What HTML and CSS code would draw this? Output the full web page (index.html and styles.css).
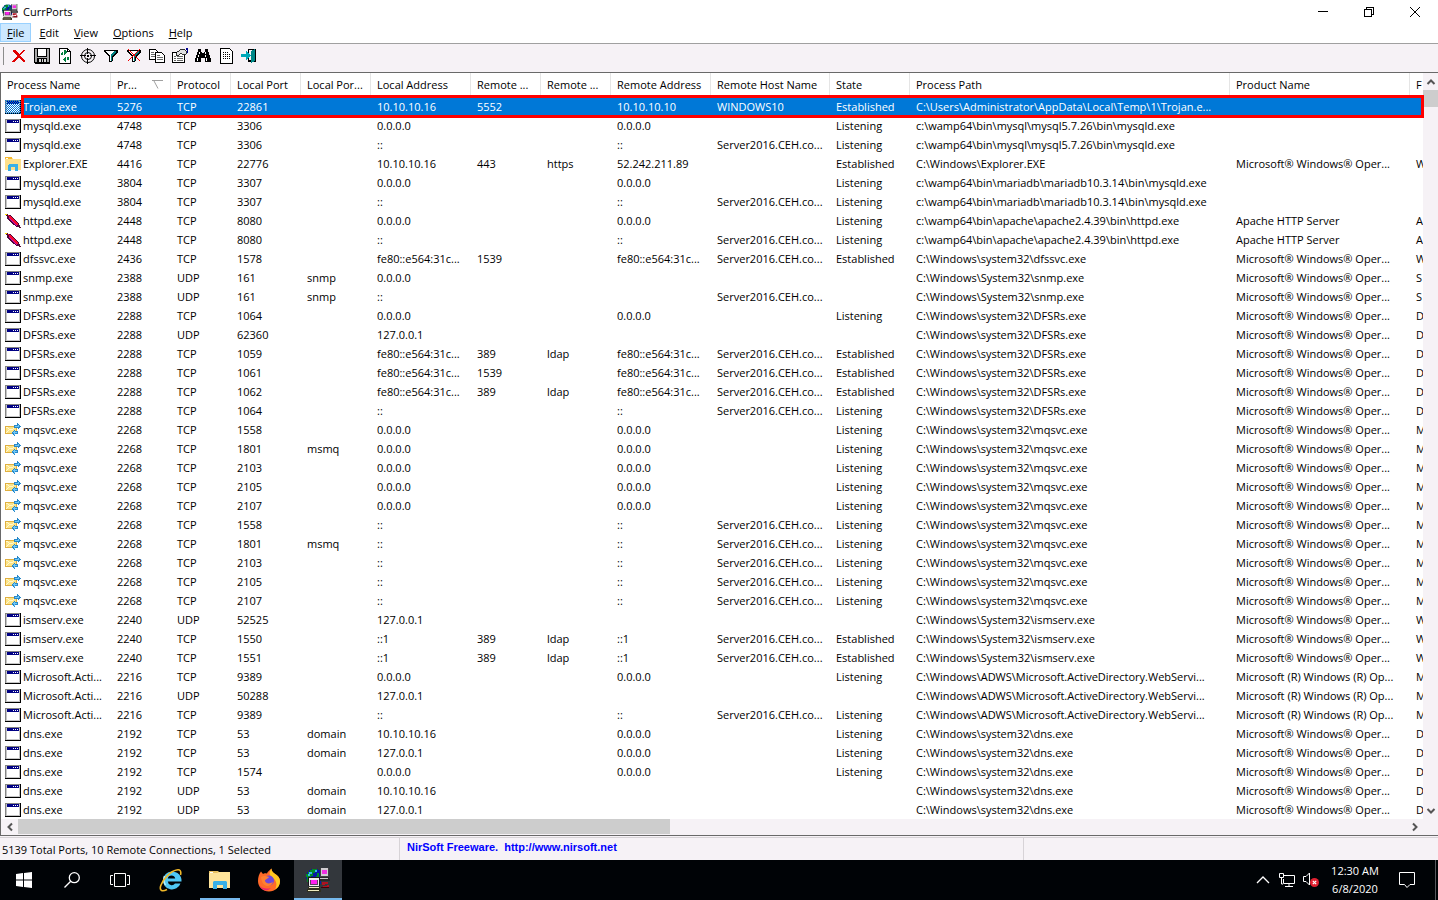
FILE: index.html
```html
<!DOCTYPE html>
<html lang="en">
<head>
    <meta charset="UTF-8">
    <meta name="viewport" content="width=device-width, initial-scale=1.0">
    <title>CurrPorts</title>
    <link rel="stylesheet" href="styles.css">
</head>
<body>
    <!-- Shared icons -->
    <svg class="sprite" aria-hidden="true">
        <symbol id="icon-app" viewBox="0 0 24 24">
            <path d="M5 1h7v1h3v14H3v-2H1v-3H0V6h1V4h2V2h2z" fill="#0818a8"/>
            <path d="M6 1h5v2H9v2H7v3H5v4H3v2H1V9H0V6h2V4h2V2h2zM11 5h2v5h-3V8h1z" fill="#008c28"/>
            <path d="M3 4h3v2H4v2H2V6h1zM9 2h2v2H9z" fill="#38b8e8"/>
            <path d="M14 0h9v9h-9z" fill="#404040"/>
            <path d="M15 0h7v8h-7z" fill="#d0ccd0"/>
            <path d="M16 2h5v4h-5z" fill="#f030e0"/>
            <path d="M13 9h10v2h1v2H12v-2h1z" fill="#282828"/>
            <path d="M14 10h8v1h-8z" fill="#c8c8c8"/>
            <path d="M2 9h12v9H2z" fill="#181818"/>
            <path d="M3 10h10v8H3z" fill="#f0ecf0"/>
            <path d="M4 12h8v5H4z" fill="#604060"/>
            <path d="M5 12h6v4H5z" fill="#ff20f0"/>
            <path d="M2 19h12v2h1v3H1v-3h1z" fill="#303020"/>
            <path d="M3 19h10v1H3zM2 22h11v1H2z" fill="#f0ecc0"/>
            <path d="M16 14h6v2h-3v1h4v3h-6v-2h4v-1h-5z" fill="#b01020"/>
            <path d="M15 19h8v1h-8z" fill="#400008"/>
        </symbol>
        <symbol id="icon-window" viewBox="0 0 16 14">
            <path d="M0 0h16v14H0z" fill="#000"/>
            <path d="M0 0h15v13H0z" fill="#848484"/>
            <path d="M1 1h14v12H1z" fill="#c6c6c6"/>
            <path d="M2 1h12v3H2z" fill="#000084"/>
            <path d="M8 2h1v1H8zM10 2h1v1h-1zM12 2h1v1h-1z" fill="#fff"/>
            <path d="M2 4h12v8H2z" fill="#fff"/>
        </symbol>
        <symbol id="icon-dither" viewBox="0 0 16 14">
            <pattern id="dots" width="2" height="2" patternUnits="userSpaceOnUse">
                <path d="M0 0h1v1H0zM1 1h1v1H1z" fill="#0078d7"/>
            </pattern>
            <use href="#icon-window" width="16" height="14"/>
            <path d="M0 0h16v14H0z" fill="url(#dots)"/>
        </symbol>
        <symbol id="icon-folder" viewBox="0 0 16 14">
            <path d="M0 0h7l1 2h8v11H0z" fill="#ffe08a"/>
            <path d="M0 0h7v2H0z" fill="#f5b82e"/>
            <path d="M1 1h2v1H1z" fill="#fff"/>
            <path d="M3 14V8l1-1h8l1 1v6h-3v-4H6v4z" fill="#38b0e8"/>
        </symbol>
        <symbol id="icon-feather" viewBox="0 0 16 14">
            <path d="M1 0l4 1 4 4 5 5 2 4-4-1-6-4-4-5z" fill="#500838"/>
            <path d="M2 1l3 1 4 4 4 4-1 1-5-4-3-4z" fill="#f80830"/>
            <path d="M4 4l8 8" stroke="#c010c8" stroke-width="1"/>
            <path d="M0 0h2v1H0z" fill="#ffe000"/>
        </symbol>
        <symbol id="icon-mail" viewBox="0 0 16 14">
            <path d="M0 3h12v8H0z" fill="#e0b040"/>
            <path d="M1 4h10v6H1z" fill="#fce488"/>
            <path d="M1 4l5 3 5-3M1 10l3-3" fill="none" stroke="#fff8d0"/>
            <path d="M9 2h3V0l4 3-3 4V5H9z" fill="#2888c8"/>
            <path d="M10 3h3V2l1 1-1 1h-3z" fill="#70c8f8"/>
            <path d="M13 8h-3V6l-4 4 4 4v-3h3z" fill="#2888c8"/>
            <path d="M12 9.500H8.500l1-1v3" fill="none" stroke="#70c8f8"/>
        </symbol>
    </svg>

    <div class="window">
        <header class="title-bar">
            <svg class="app-icon"><use href="#icon-app"/></svg>
            <h1>CurrPorts</h1>
            <div class="window-buttons">
                <button aria-label="Minimize"><svg viewBox="0 0 12 12"><path d="M1 5.500h10"/></svg></button>
                <button aria-label="Restore"><svg viewBox="0 0 12 12"><path d="M1.500 3.500h7v7h-7zM3.500 3.500v-2h7v7h-2"/></svg></button>
                <button aria-label="Close"><svg class="smooth" viewBox="0 0 12 12"><path d="M1 1l10 10M11 1L1 11"/></svg></button>
            </div>
        </header>

        <nav class="menu-bar">
            <button class="active"><u>F</u>ile</button>
            <button><u>E</u>dit</button>
            <button><u>V</u>iew</button>
            <button><u>O</u>ptions</button>
            <button><u>H</u>elp</button>
        </nav>

        <div class="toolbar">
            <button aria-label="Close connections"><svg viewBox="0 0 16 16"><path d="M2 2h2l4 4 5-4h1L9 8l5 5v1h-2L8 10l-5 4H1l5-6-4-4z" fill="#e00000"/></svg></button>
            <button aria-label="Save"><svg viewBox="0 0 16 16"><path d="M0 0h16v16H1l-1-1z" fill="#000"/><path d="M1 1h14v13H1z" fill="#a8a8a8"/><path d="M3 0h10v9H3z" fill="#000"/><path d="M4 1h8v7H4z" fill="#fff"/><path d="M3 10h10v5H3z" fill="#000"/><path d="M5 11h2v3H5zM8 11h1v3H8zM10 11h2v3h-2z" fill="#d8d8d8"/></svg></button>
            <button aria-label="Refresh"><svg viewBox="0 0 16 16"><path d="M2.500.5h8l3 3v12h-11z" fill="#fff" stroke="#000"/><path d="M10.500.5v3h3" fill="none" stroke="#000"/><path d="M8 3v1H6v3H4V5h1V4h2V2h1l2 2-2 3H7V3M8 13v-1h2V9h2v2l-1 1H9v2H8l-2-2 2-3h1v4" fill="#008040"/></svg></button>
            <button aria-label="Process target"><svg viewBox="0 0 16 16" class="smooth"><g fill="none" stroke="#000"><circle cx="8" cy="8" r="6.500"/><circle cx="8" cy="8" r="3.500"/><path d="M7.500 0v6M7.500 10v6M0 7.500h6M10 7.500h6"/></g><path d="M7 7h2v2H7z"/></svg></button>
            <button aria-label="Filter"><svg viewBox="0 0 16 16"><path d="M1 2h14v2l-5 5v4l-2 1H6V9L1 4z" fill="#000"/><path d="M3 3h10v1l-4 4v5H7V8L3 4z" fill="#fff"/><path d="M11 3h2v1L9 8v5H8V7z" fill="#008080"/></svg></button>
            <button aria-label="Clear filter"><svg viewBox="0 0 16 16"><path d="M1 2h14v2l-5 5v4l-2 1H6V9L1 4z" fill="#000"/><path d="M3 3h10v1l-4 4v5H7V8L3 4z" fill="#fff"/><path d="M11 3h2v1L9 8v5H8V7z" fill="#008080"/><path d="M2 1l12 12M14 1L2 13" stroke="#f00000"/></svg></button>
            <button aria-label="Copy"><svg viewBox="0 0 16 16"><g fill="#fff" stroke="#000"><path d="M.5 1.500h6l2 2v8h-8z"/><path d="M6.500 4.500h6l3 3v7h-9z"/></g><path d="M2 4.500h3M2 6.500h4M2 8.500h4M8 7.500h3M8 9.500h6M8 11.500h6" stroke="#666"/></svg></button>
            <button aria-label="Properties"><svg viewBox="0 0 16 16"><path d="M.5 4.500h12v10H.5z" fill="#fff" stroke="#000"/><path d="M2 8.500h2M5 8.500h6M2 10.500h2M5 10.500h6M2 12.500h2M5 12.500h6" stroke="#666"/><path d="M4 5l4-3 4-1 2 2v3l-3 1-2-2-3 3-2-1z" fill="#e0e0e0" stroke="#000" stroke-width=".8"/><path d="M14 0h2v5h-1V2h-1z" fill="#000090"/></svg></button>
            <button aria-label="Find"><svg viewBox="0 0 16 16"><path d="M3 1h3v3h1v1h2V4h1V1h3v3h1v3h1v3h1v4h-6v-4H6v4H0v-4h1V7h1V4h1z" fill="#000"/><path d="M4 4h1v2H4zM10 4h1v2h-1zM3 7h1v2H3zM10 7h1v2h-1zM2 10h1v3H2zM11 10h1v3h-1z" fill="#fff"/></svg></button>
            <button aria-label="HTML report"><svg viewBox="0 0 16 16"><path d="M2.500.5h9l3 3v12h-12z" fill="#fff" stroke="#000"/><path d="M5 4.500h6M5 6.500h7M5 8.500h7M5 10.500h7" stroke="#000" stroke-dasharray="1 1"/></svg></button>
            <button aria-label="Exit"><svg viewBox="0 0 16 16"><path d="M7 1h8v13H7z" fill="#000"/><path d="M8 2h3v10H8z" fill="#f6f2f6"/><path d="M10 3l4-2v12l-4 2z" fill="#008888"/><path d="M0 6h5V3l5 4-5 5V9H0z" fill="#00a8b8"/></svg></button>
        </div>

        <main class="list">
            <div class="list-view">
                <table class="ports">
                    <colgroup>
                        <col class="w110"><col class="w60"><col class="w60"><col class="w70"><col class="w70">
                        <col class="w100"><col class="w70"><col class="w70"><col class="w100"><col class="w119">
                        <col class="w80"><col class="w320"><col class="w180"><col>
                    </colgroup>
                    <thead>
                        <tr>
                            <th>Process Name</th>
                            <th><span class="sorted">Pr...<svg viewBox="0 0 11 9"><path d="M0 .5h11M2 1l4 7.500"/></svg></span></th>
                            <th>Protocol</th>
                            <th>Local Port</th>
                            <th>Local Por...</th>
                            <th>Local Address</th>
                            <th>Remote ...</th>
                            <th>Remote ...</th>
                            <th>Remote Address</th>
                            <th>Remote Host Name</th>
                            <th>State</th>
                            <th>Process Path</th>
                            <th>Product Name</th>
                            <th>F</th>
                        </tr>
                    </thead>
                    <tbody id="portRows"></tbody>
                </table>
            </div>
            <div class="scroll-y">
                <button aria-label="Scroll up"><svg viewBox="0 0 10 10"><path d="M1.500 7L5 3.500 8.500 7"/></svg></button>
                <div class="thumb"></div>
                <button class="end" aria-label="Scroll down"><svg viewBox="0 0 10 10"><path d="M1.500 3L5 6.500 8.500 3"/></svg></button>
            </div>
            <div class="scroll-x">
                <button aria-label="Scroll left"><svg viewBox="0 0 10 10"><path d="M7 1.500L3.500 5 7 8.500"/></svg></button>
                <div class="track"><div class="thumb"></div></div>
                <button aria-label="Scroll right"><svg viewBox="0 0 10 10"><path d="M3 1.500L6.500 5 3 8.500"/></svg></button>
            </div>
            <div class="highlight"></div>
        </main>

        <footer class="status-bar">
            <span class="totals">5139 Total Ports, 10 Remote Connections, 1 Selected</span>
            <span class="credit"><a href="http://www.nirsoft.net">NirSoft Freeware.&nbsp; http://www.nirsoft.net</a></span>
            <span class="rest"></span>
        </footer>
    </div>

    <div class="taskbar">
        <button aria-label="Start"><svg class="s16" viewBox="0 0 16 16"><path d="M0 2l7-1v6.500H0zM8 1l8-1v7.500H8zM0 8.500h7V15l-7-1zM8 8.500h8V16l-8-1z" fill="#fff"/></svg></button>
        <button aria-label="Search"><svg class="s16" viewBox="0 0 16 16"><g fill="none" stroke="#fff" stroke-width="1.300"><circle cx="10.300" cy="5.700" r="5"/><path d="M6.700 9.300L.5 15.500"/></g></svg></button>
        <button aria-label="Task View"><svg class="s20" viewBox="0 0 20 16"><path d="M4.500 1.500h11v13h-11zM3 3.500H.5v9H3M17 3.500h2.500v9H17" fill="none" stroke="#fff"/></svg></button>
        <div class="apps">
            <button aria-label="Internet Explorer"><svg class="s24" viewBox="0 0 24 24"><path d="M12.500 3.500a9 9 0 1 0 9 12h-5.500a4 4 0 0 1-7.200-2h13.700c.6-6-4-10-10-10zM8.800 10.500c.4-4 7-4 7.400 0z" fill="#50c8f4"/><path d="M5.500 8C4.500 11 4.500 14 6.500 17" fill="none" stroke="#b8f0ff" stroke-width="1.500"/><path d="M21.500 7c1-4-.5-6-4-5C12 3 4 11 1.800 17.500 0 23 3.500 24 8 21.500" fill="none" stroke="#f0b828" stroke-width="1.600"/></svg></button>
            <button class="open" aria-label="File Explorer"><svg class="s22" viewBox="0 0 22 18"><path d="M0 0h9l2 2h10v15H0z" fill="#e8c060"/><path d="M0 2h8l2-1h11v16H0z" fill="#ffe49a"/><path d="M1 1h3v1H1z" fill="#fff"/><path d="M4 18v-7l1-1h12l1 1v7h-4v-4H8v4z" fill="#38b0e8"/></svg></button>
            <button aria-label="Firefox"><svg class="s24" viewBox="0 0 24 24"><path d="M1 13C1 9 2 6 4 3.500L6 6c1-1 2-1 4-.5C10.500 4 12 2.500 14.500.5c0 2 .5 3 3 5C21 7 23 10 23 13c0 6-5 10.500-11 10.500S1 19 1 13z" fill="#ff6a28"/><path d="M14.500.5c0 2 .5 3 3 5C21 8 23 10 23 13c0 4-2 7-5 8.500 3-5 1-10-3-12-3-2-3-6-.5-9z" fill="#ffc820"/><path d="M2 17c3 4 8 4 12 3-4 4-9 3-12-3z" fill="#f02868"/><circle cx="12" cy="12.500" r="5" fill="#7048d8"/><path d="M4 9c3-1.500 5-1 8 0-1 2-4 2-4 4 1 3 5 3 8 1-2 6-11 6-12-5z" fill="#ff8030"/></svg></button>
            <button class="open current" aria-label="CurrPorts"><svg class="s24"><use href="#icon-app"/></svg></button>
        </div>
        <div class="tray">
            <button aria-label="Show hidden icons"><svg class="s14" viewBox="0 0 14 8"><path d="M1 7l6-6 6 6" fill="none" stroke="#fff" stroke-width="1.300"/></svg></button>
            <button aria-label="Network"><svg class="s16" viewBox="0 0 16 14"><path d="M5 2.500h10.500v8H4.500V6M10 11v2M6 13.500h8M.5.5h4v4h-4zM2.500 5v6H4" fill="none" stroke="#fff"/></svg></button>
            <button aria-label="Volume"><svg class="s16" viewBox="0 0 16 16"><path d="M.5 4.500H3L6.500 1v12L3 9.500H.5z" fill="none" stroke="#fff"/><circle cx="11.500" cy="10.500" r="4.500" fill="#e02030"/><path d="M9.800 8.800l3.400 3.400M13.200 8.800l-3.400 3.400" stroke="#fff" stroke-width="1.200"/></svg></button>
            <div class="clock"><span>12:30 AM</span><span>6/8/2020</span></div>
            <button class="notes" aria-label="Notifications"><svg class="s16" viewBox="0 0 16 16"><path d="M.5.5h15v12H11l-3 3-2.500-3h-5z" fill="none" stroke="#fff"/></svg></button>
            <button class="desktop" aria-label="Show desktop"></button>
        </div>
    </div>

    <script src="script.js"></script>
</body>
</html>
```

FILE: styles.css
```css
* {
    box-sizing: border-box;
}
body {
    margin: 0;
    height: 100vh;
    display: flex;
    flex-direction: column;
    overflow: hidden;
    background: #fff;
    color: #000;
    font-family: "Open Sans", "Noto Sans", sans-serif;
    font-size: 11px;
}
button {
    margin: 0;
    padding: 0;
    border: 0;
    background: none;
    color: inherit;
    font: inherit;
}
svg {
    display: block;
}
.sprite {
    position: absolute;
    width: 0;
    height: 0;
}
.window {
    flex: 1;
    min-height: 0;
    display: flex;
    flex-direction: column;
    background: #f6f2f6;
}

/* Title bar */
.title-bar {
    display: flex;
    align-items: center;
    height: 23px;
    padding-left: 2px;
    background: #fff;
}
.app-icon {
    width: 16px;
    height: 16px;
}
.title-bar h1 {
    margin: 0 auto 0 5px;
    font-size: 11px;
    font-weight: normal;
}
.window-buttons {
    display: flex;
}
.window-buttons button {
    display: flex;
    align-items: center;
    justify-content: center;
    width: 46px;
    height: 21px;
}
.window-buttons svg {
    width: 12px;
    height: 12px;
    fill: none;
    stroke: #000;
    shape-rendering: crispEdges;
}
.window-buttons .smooth {
    shape-rendering: auto;
}

/* Menu */
.menu-bar {
    display: flex;
    gap: 1px;
    height: 20px;
    background: #fff;
}
.menu-bar button {
    height: 19px;
    padding: 0 6px;
    border: 1px solid transparent;
}
.menu-bar .active {
    background: #cce8ff;
    border-color: #99d1ff;
}

/* Toolbar */
.toolbar {
    display: flex;
    align-items: center;
    gap: 7px;
    height: 29px;
    padding: 0 3px 4px;
    border-top: 1px solid #a0a0a0;
}
.toolbar::before {
    content: "";
    width: 1px;
    height: 18px;
    background: #8c8c8c;
}
.toolbar svg {
    width: 16px;
    height: 16px;
    shape-rendering: crispEdges;
}
.toolbar .smooth {
    shape-rendering: auto;
}

/* Port list */
.list {
    position: relative;
    flex: 1;
    min-height: 0;
    display: grid;
    grid-template-columns: minmax(0, 1fr) 15px;
    grid-template-rows: minmax(0, 1fr) 16px;
    border: solid #696969;
    border-width: 1px 0 1px 1px;
}
.list-view {
    overflow: hidden;
    background: #fff;
}
.ports {
    width: 1510px;
    table-layout: fixed;
    border-collapse: separate;
    border-spacing: 0;
}
.w60 { width: 60px; }
.w70 { width: 70px; }
.w80 { width: 80px; }
.w100 { width: 100px; }
.w110 { width: 110px; }
.w119 { width: 119px; }
.w180 { width: 180px; }
.w320 { width: 320px; }
.ports th,
.ports td {
    padding: 0 0 0 6px;
    overflow: hidden;
    white-space: nowrap;
    text-align: left;
    font-weight: normal;
}
.ports th {
    height: 24px;
    padding-bottom: 2px;
    border-right: 1px solid #e5e5e5;
}
.ports td {
    height: 19px;
    line-height: 19px;
}
.ports td:first-child {
    padding-left: 4px;
}
.sorted {
    display: flex;
    align-items: center;
    justify-content: space-between;
    padding-right: 7px;
}
.sorted svg {
    width: 11px;
    height: 9px;
    fill: none;
    stroke: #a0a0a0;
}
.process {
    display: flex;
    align-items: center;
    gap: 2px;
}
.process svg {
    flex: none;
    width: 16px;
    height: 14px;
    shape-rendering: crispEdges;
}
.selected td {
    background: #0078d7;
    color: #fff;
}
.selected td:first-child {
    background: linear-gradient(to right, #fff 20px, #0078d7 20px);
}
.highlight {
    position: absolute;
    top: 22px;
    left: 20px;
    right: 14px;
    height: 23px;
    border: 3px solid #f00;
    pointer-events: none;
}

/* Scroll bars */
.scroll-y {
    display: flex;
    flex-direction: column;
}
.scroll-y button,
.scroll-x button {
    display: flex;
    align-items: center;
    justify-content: center;
    flex: none;
}
.scroll-y button {
    height: 17px;
}
.scroll-y .end {
    margin-top: auto;
}
.scroll-x button {
    width: 17px;
}
.scroll-y svg,
.scroll-x svg {
    width: 10px;
    height: 10px;
    fill: none;
    stroke: #555;
    stroke-width: 2;
}
.thumb {
    background: #cdcdcd;
}
.scroll-y .thumb {
    height: 17px;
}
.scroll-x {
    display: flex;
    padding-bottom: 1px;
}
.scroll-x .track {
    flex: 1;
    display: flex;
}
.scroll-x .thumb {
    width: 47%;
}

/* Status bar */
.status-bar {
    display: grid;
    grid-template-columns: 400px 624px 1fr;
    height: 23px;
    margin-top: 1px;
    padding-bottom: 1px;
    border-top: 1px solid #d7d3d7;
}
.totals,
.credit {
    padding-top: 1px;
    border-right: 1px solid #d7d3d7;
}
.totals {
    padding-left: 2px;
    line-height: 22px;
}
.credit {
    padding-left: 7px;
    font: bold 11px/17px "Liberation Sans", Arial, sans-serif;
}
.credit a {
    color: #00f;
    text-decoration: none;
}

/* Taskbar */
.taskbar {
    display: flex;
    height: 40px;
    background: #000306;
    color: #fff;
}
.taskbar button {
    display: flex;
    align-items: center;
    justify-content: center;
    width: 48px;
    height: 40px;
}
.apps {
    display: flex;
    gap: 1px;
    margin-left: 3px;
}
.apps .open {
    background: linear-gradient(#76b9ed, #76b9ed) center bottom / 40px 2px no-repeat;
}
.apps .current {
    background-color: #33373c;
    background-size: 48px 2px;
}
.s14 { width: 14px; height: 8px; }
.s16 { width: 16px; height: 16px; }
.s20 { width: 20px; height: 16px; }
.s22 { width: 22px; height: 18px; }
.s24 { width: 24px; height: 24px; }
.tray {
    display: flex;
    margin-left: auto;
}
.tray button {
    width: 24px;
}
.clock {
    display: flex;
    flex-direction: column;
    justify-content: center;
    width: 64px;
    text-align: center;
    line-height: 18px;
}
.tray .notes {
    width: 40px;
}
.tray .desktop {
    width: 3px;
    margin-left: 8px;
    border-left: 1px solid #55585c;
}
```

FILE: script.js
```js
const PRODUCTS = {
    ms: "Microsoft® Windows® Oper...",
    adws: "Microsoft (R) Windows (R) Op...",
    apache: "Apache HTTP Server",
    none: ""
};

const HOST = "Server2016.CEH.co...";
const FE80 = "fe80::e564:31c...";

// icon, name, pid, path, product, first letter of the description
const PROCESSES = {
    trojan: ["dither", "Trojan.exe", 5276, "C:\\Users\\Administrator\\AppData\\Local\\Temp\\1\\Trojan.e...", "none", ""],
    mysql: ["window", "mysqld.exe", 4748, "c:\\wamp64\\bin\\mysql\\mysql5.7.26\\bin\\mysqld.exe", "none", ""],
    explorer: ["folder", "Explorer.EXE", 4416, "C:\\Windows\\Explorer.EXE", "ms", "W"],
    mariadb: ["window", "mysqld.exe", 3804, "c:\\wamp64\\bin\\mariadb\\mariadb10.3.14\\bin\\mysqld.exe", "none", ""],
    httpd: ["feather", "httpd.exe", 2448, "c:\\wamp64\\bin\\apache\\apache2.4.39\\bin\\httpd.exe", "apache", "A"],
    dfssvc: ["window", "dfssvc.exe", 2436, "C:\\Windows\\system32\\dfssvc.exe", "ms", "W"],
    snmp: ["window", "snmp.exe", 2388, "C:\\Windows\\System32\\snmp.exe", "ms", "S"],
    dfsrs: ["window", "DFSRs.exe", 2288, "C:\\Windows\\system32\\DFSRs.exe", "ms", "D"],
    mqsvc: ["mail", "mqsvc.exe", 2268, "C:\\Windows\\system32\\mqsvc.exe", "ms", "M"],
    ismserv: ["window", "ismserv.exe", 2240, "C:\\Windows\\System32\\ismserv.exe", "ms", "W"],
    adws: ["window", "Microsoft.Acti...", 2216, "C:\\Windows\\ADWS\\Microsoft.ActiveDirectory.WebServi...", "adws", "M"],
    dns: ["window", "dns.exe", 2192, "C:\\Windows\\system32\\dns.exe", "ms", "D"]
};

// process, protocol, local port, port name, local address, remote port, port name, remote address, host, state
const CONNECTIONS = [
    ["trojan", "TCP", 22861, "", "10.10.10.16", 5552, "", "10.10.10.10", "WINDOWS10", "Established"],
    ["mysql", "TCP", 3306, "", "0.0.0.0", "", "", "0.0.0.0", "", "Listening"],
    ["mysql", "TCP", 3306, "", "::", "", "", "::", HOST, "Listening"],
    ["explorer", "TCP", 22776, "", "10.10.10.16", 443, "https", "52.242.211.89", "", "Established"],
    ["mariadb", "TCP", 3307, "", "0.0.0.0", "", "", "0.0.0.0", "", "Listening"],
    ["mariadb", "TCP", 3307, "", "::", "", "", "::", HOST, "Listening"],
    ["httpd", "TCP", 8080, "", "0.0.0.0", "", "", "0.0.0.0", "", "Listening"],
    ["httpd", "TCP", 8080, "", "::", "", "", "::", HOST, "Listening"],
    ["dfssvc", "TCP", 1578, "", FE80, 1539, "", FE80, HOST, "Established"],
    ["snmp", "UDP", 161, "snmp", "0.0.0.0", "", "", "", "", ""],
    ["snmp", "UDP", 161, "snmp", "::", "", "", "", HOST, ""],
    ["dfsrs", "TCP", 1064, "", "0.0.0.0", "", "", "0.0.0.0", "", "Listening"],
    ["dfsrs", "UDP", 62360, "", "127.0.0.1", "", "", "", "", ""],
    ["dfsrs", "TCP", 1059, "", FE80, 389, "ldap", FE80, HOST, "Established"],
    ["dfsrs", "TCP", 1061, "", FE80, 1539, "", FE80, HOST, "Established"],
    ["dfsrs", "TCP", 1062, "", FE80, 389, "ldap", FE80, HOST, "Established"],
    ["dfsrs", "TCP", 1064, "", "::", "", "", "::", HOST, "Listening"],
    ["mqsvc", "TCP", 1558, "", "0.0.0.0", "", "", "0.0.0.0", "", "Listening"],
    ["mqsvc", "TCP", 1801, "msmq", "0.0.0.0", "", "", "0.0.0.0", "", "Listening"],
    ["mqsvc", "TCP", 2103, "", "0.0.0.0", "", "", "0.0.0.0", "", "Listening"],
    ["mqsvc", "TCP", 2105, "", "0.0.0.0", "", "", "0.0.0.0", "", "Listening"],
    ["mqsvc", "TCP", 2107, "", "0.0.0.0", "", "", "0.0.0.0", "", "Listening"],
    ["mqsvc", "TCP", 1558, "", "::", "", "", "::", HOST, "Listening"],
    ["mqsvc", "TCP", 1801, "msmq", "::", "", "", "::", HOST, "Listening"],
    ["mqsvc", "TCP", 2103, "", "::", "", "", "::", HOST, "Listening"],
    ["mqsvc", "TCP", 2105, "", "::", "", "", "::", HOST, "Listening"],
    ["mqsvc", "TCP", 2107, "", "::", "", "", "::", HOST, "Listening"],
    ["ismserv", "UDP", 52525, "", "127.0.0.1", "", "", "", "", ""],
    ["ismserv", "TCP", 1550, "", "::1", 389, "ldap", "::1", HOST, "Established"],
    ["ismserv", "TCP", 1551, "", "::1", 389, "ldap", "::1", HOST, "Established"],
    ["adws", "TCP", 9389, "", "0.0.0.0", "", "", "0.0.0.0", "", "Listening"],
    ["adws", "UDP", 50288, "", "127.0.0.1", "", "", "", "", ""],
    ["adws", "TCP", 9389, "", "::", "", "", "::", HOST, "Listening"],
    ["dns", "TCP", 53, "domain", "10.10.10.16", "", "", "0.0.0.0", "", "Listening"],
    ["dns", "TCP", 53, "domain", "127.0.0.1", "", "", "0.0.0.0", "", "Listening"],
    ["dns", "TCP", 1574, "", "0.0.0.0", "", "", "0.0.0.0", "", "Listening"],
    ["dns", "UDP", 53, "domain", "10.10.10.16", "", "", "", "", ""],
    ["dns", "UDP", 53, "domain", "127.0.0.1", "", "", "", "", ""]
];

function renderRow(connection, index) {
    const [key, ...values] = connection;
    const [icon, name, pid, path, product, description] = PROCESSES[key];
    const cells = [pid, ...values, path, PRODUCTS[product], description];
    return `<tr class="${index === 0 ? "selected" : ""}">
        <td><div class="process"><svg><use href="#icon-${icon}"/></svg>${name}</div></td>
        ${cells.map(cell => `<td>${cell}</td>`).join("")}
    </tr>`;
}

document.getElementById("portRows").innerHTML = CONNECTIONS.map(renderRow).join("");
```
